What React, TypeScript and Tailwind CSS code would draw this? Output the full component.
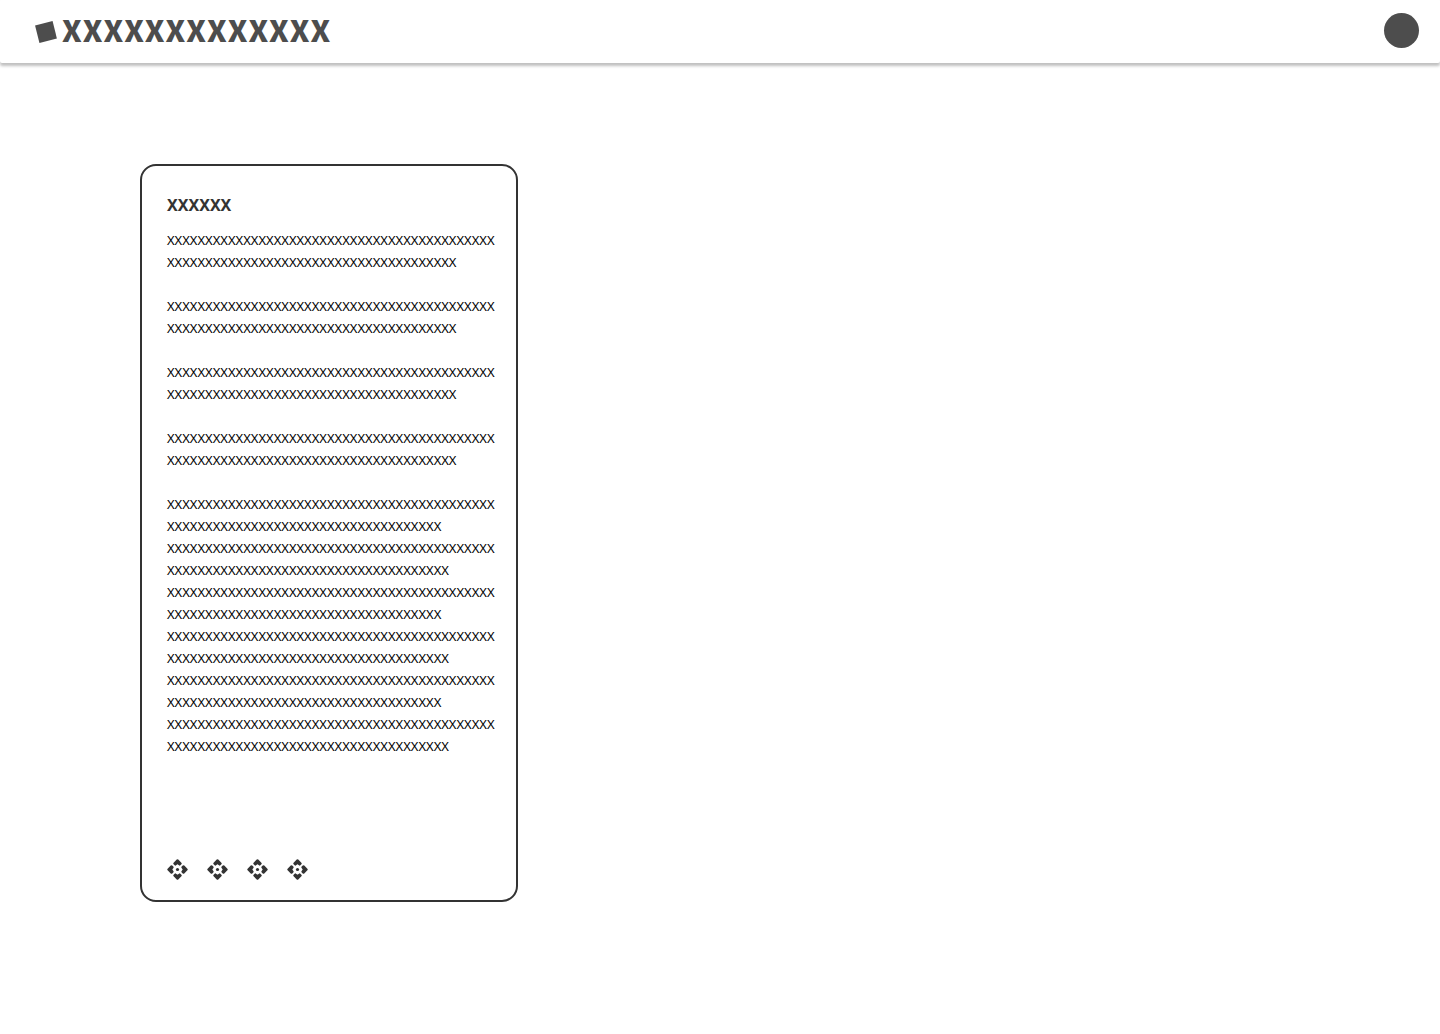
const long = (n: number) => 'X'.repeat(n);

const paragraphs: number[][] = [[81], [81], [81], [81], [79, 80, 79, 80, 79, 80]];

const actions = ['First', 'Second', 'Third', 'Fourth'];

const petal = 'M10.5 1.4L7.4 4.5L8.4 5.5L10.5 3.9L12.6 5.5L13.6 4.5Z';

function MoveIcon() {
  return (
    <svg viewBox="0 0 21 21" className="size-[21px]" fill="currentColor" stroke="currentColor" strokeWidth="2.2" strokeLinejoin="round" aria-hidden="true">
      <path d={petal} />
      <path d={petal} transform="rotate(90 10.5 10.5)" />
      <path d={petal} transform="rotate(180 10.5 10.5)" />
      <path d={petal} transform="rotate(270 10.5 10.5)" />
      <circle cx="10.5" cy="10.5" r="1.6" stroke="none" />
    </svg>
  );
}

export default function App() {
  return (
    <div className="min-h-screen bg-white font-['Noto_Sans',sans-serif] text-[#333]">
      <header className="flex h-[63px] items-center justify-between rounded-xs bg-white pr-[21px] pb-0.5 pl-[37px] shadow-[0_3px_3px_rgba(0,0,0,0.25)]">
        <a href="#" className="flex items-center gap-[7px] text-[#4d4d4d]">
          <span className="mt-0.5 size-[18px] -rotate-14 bg-[#4d4d4d]" />
          <span className="pb-[3px] font-['Noto_Sans_CJK_JP','Noto_Sans',sans-serif] text-[30px] leading-10 font-black tracking-[1px]">{long(13)}</span>
        </a>
        <button type="button" aria-label="Account" className="size-[35px] rounded-full bg-[#4d4d4d]" />
      </header>
      <main className="px-[140px] pt-[101px] pb-10">
        <article className="w-[378px] rounded-2xl border-2 border-[#333] pt-7 pr-5 pb-5 pl-[25px]">
          <h1 className="text-base leading-[22px] font-bold">{long(6)}</h1>
          <div className="mt-[13px] flex flex-col gap-[22px] text-[13px] leading-[22px] break-all text-black">
            {paragraphs.map((lines, i) => (
              <div key={i}>
                {lines.map((n, j) => (
                  <p key={j}>{long(n)}</p>
                ))}
              </div>
            ))}
          </div>
          <div className="mt-[102px] flex gap-[19px]">
            {actions.map((name) => (
              <button key={name} type="button" aria-label={name}>
                <MoveIcon />
              </button>
            ))}
          </div>
        </article>
      </main>
    </div>
  );
}
